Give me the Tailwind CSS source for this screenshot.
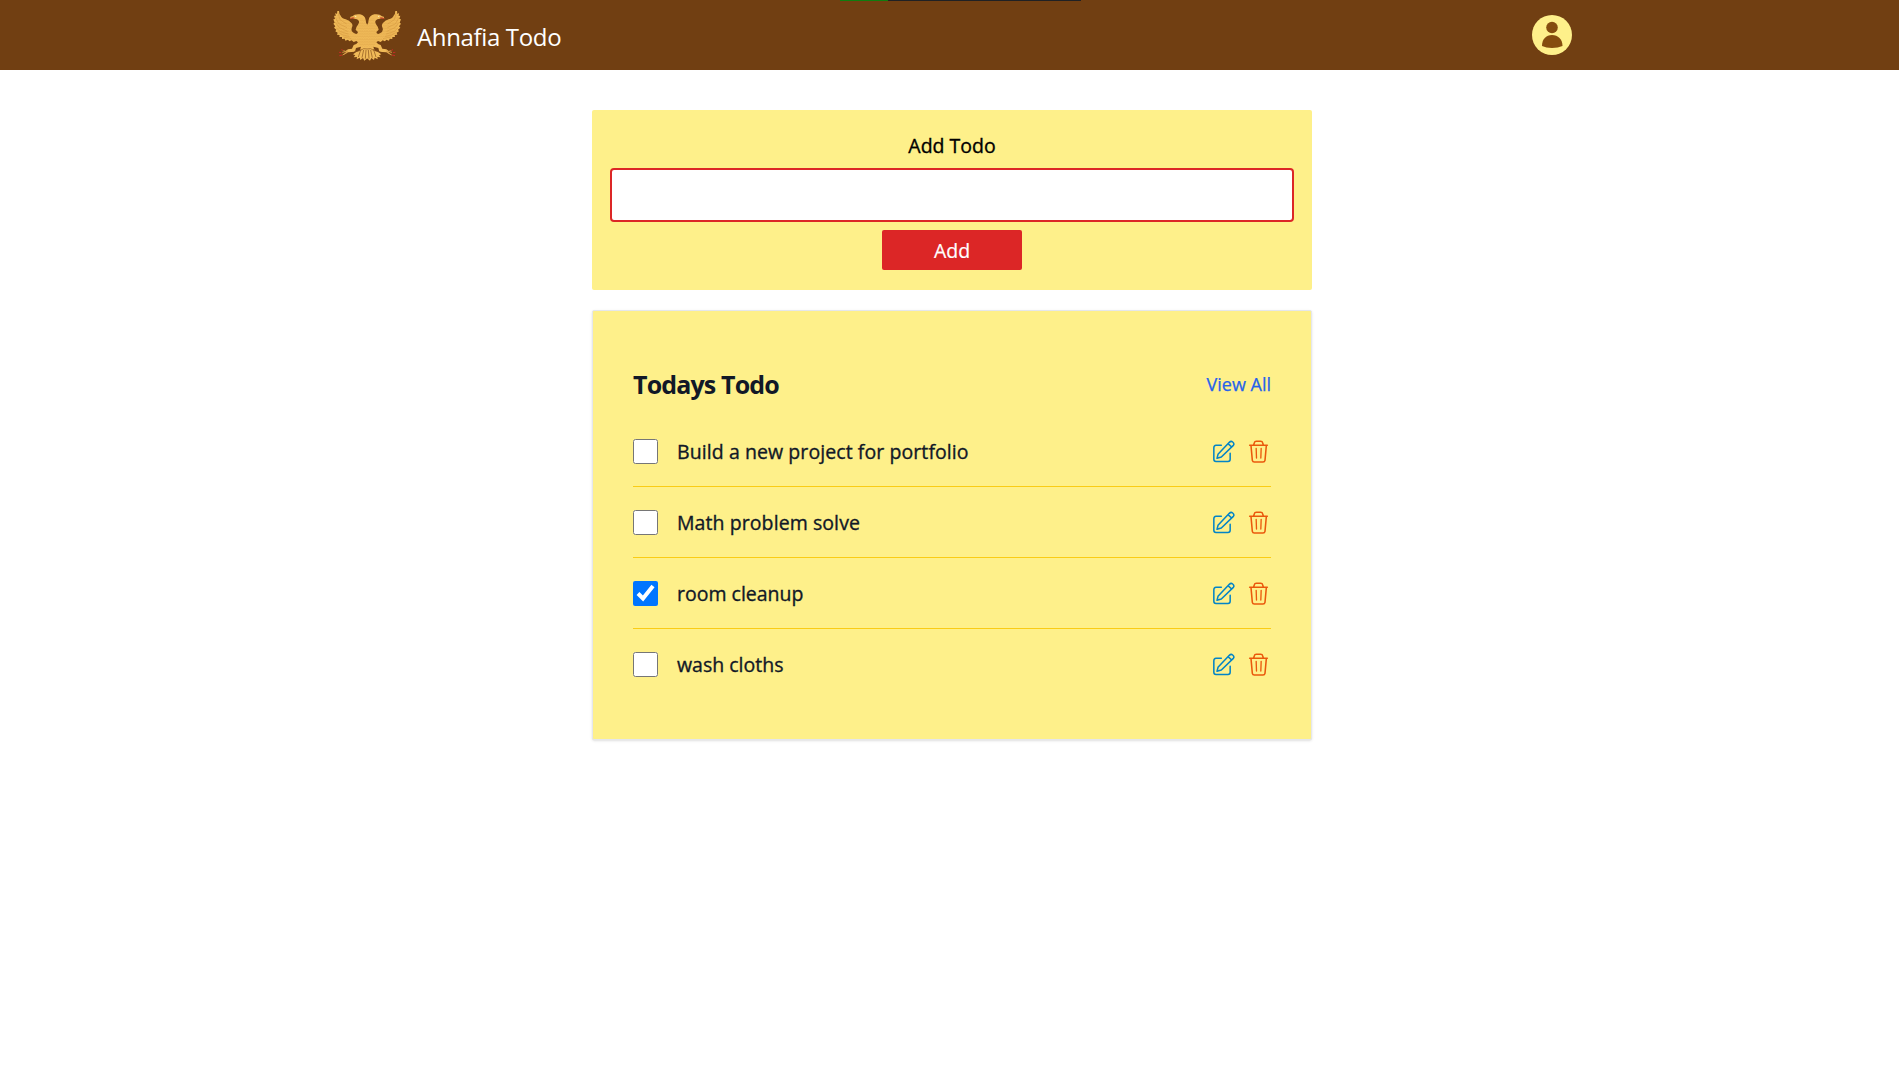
<!DOCTYPE html>
<html lang="en">
<head>
<meta charset="utf-8">
<title>Ahnafia Todo</title>
<script src="https://cdn.jsdelivr.net/npm/@tailwindcss/browser@4"></script>
</head>
<body class="bg-white min-h-screen overflow-hidden font-['Open_Sans',sans-serif] text-black">
<svg class="hidden">
  <symbol id="edit" viewBox="0 0 72 72"><g fill="none" stroke="currentColor" stroke-width="4.600" stroke-linejoin="round" stroke-linecap="round"><path d="M28 16H12Q5.500 16 5.500 23V58Q5.500 64.500 12 64.500H48Q54.500 64.500 54.500 58V40"/><path d="M15 55L18 43L52 7Q57 2 62 6Q68 11 64 16L28 51ZM48 11L59 21"/></g></symbol>
  <symbol id="trash" viewBox="0 0 72 72"><g fill="none" stroke="currentColor" stroke-width="4.600" stroke-linejoin="round" stroke-linecap="round"><path d="M5 16H58M17 15L19 8Q20 4 25 4H38Q43 4 44 8L46 15M9 17L13 61Q14 66 19 66H45Q50 66 51 61L55 17"/><path stroke-width="4" d="M24.500 25L25.500 54M39.500 25L38.500 54"/></g></symbol>
</svg>
<div class="absolute top-0 left-[840px] w-[241px] h-px bg-[#202124] flex"><div class="w-12 h-px bg-[#107c10]"></div></div>
<header class="h-[70px] bg-[#713f12]">
  <div class="ml-[333px] w-[1239px] h-full flex items-center justify-between">
    <a class="flex items-center">
      <svg class="w-[68px] h-[52px] mt-px" viewBox="24 12 204 156">
        <defs>
          <pattern id="feather" width="7" height="8" patternUnits="userSpaceOnUse"><path d="M0 2Q3.500 8 7 2" fill="none" stroke="#d29a40" stroke-width="1.300"/></pattern>
          <g id="half">
            <path d="M127 57Q122 50 122 42Q120 28 105 25Q89 23 82 31Q75 31 75 38Q83 35 88 38Q98 39 100 43Q105 48 99 56Q93 63 92 71L99 78Q97 87 88 82Q77 77 80 66Q85 57 79 51Q73 43 62 40Q50 37 47 29Q42 24 42 15L37 15L36 24L31 21L32 30L27 29L30 39L25 40L29 50L25 53L31 61L27 65L34 71L31 76L38 80L36 86L44 87L43 93L51 93L51 99L59 98L61 104L69 101L73 106L80 103L86 108L94 105L99 109Q95 116 86 117L81 128L69 130L62 135L52 132L63 139L53 148L69 139L90 137L93 126L108 122L104 134L94 138L84 145L91 148L86 154L96 153L95 160L104 155L106 162L114 156L118 164L127 157Z" fill="#f0ba58"/>
            <path d="M127 57Q122 50 122 42Q115 36 105 36Q105 48 99 56Q93 63 92 71L99 78L96 107L108 122H127ZM80 66Q85 57 79 51Q73 43 62 40Q50 37 47 29L37 24L32 40L38 80L60 98L96 105L99 78Q97 87 88 82Q77 77 80 66Z" fill="url(#feather)"/>
            <path d="M39 20L45 41L65 54M31 34L41 53L66 65M30 48L43 65L68 76M33 65L46 77L70 84M41 80L53 87L73 91M56 94L67 95L79 98" fill="none" stroke="#cf8f38" stroke-width="1.300"/>
            <path d="M108 129L100 153M116 132L111 155M123 132L121 158" stroke="#855019" stroke-width="2"/>
            <path d="M87 137L107 133Q115 125 127 129" fill="none" stroke="#8c561f" stroke-width="2"/>
            <path d="M76 38Q82 34 88 36" stroke="#c9271e" stroke-width="2.500" fill="none"/>
            <circle cx="92" cy="31" r="2" fill="#fff3c3"/>
            <path d="M49 131L54 133M43 149L52 147M42 139L49 140" stroke="#d5282b" stroke-width="2.500"/>
            <path d="M52 139L69 135M53 147L67 139" stroke="#d89b45" stroke-width="3"/>
          </g>
        </defs>
        <use href="#half"/><use href="#half" transform="matrix(-1 0 0 1 253 0)"/>
      </svg>
      <span class="ml-4 pt-1 text-2xl leading-8 tracking-[-0.35px] text-white">Ahnafia Todo</span>
    </a>
    <svg class="w-10 h-10" viewBox="0 0 40 40"><circle cx="20" cy="20" r="20" fill="#fef08a"/><g fill="#854d0e"><circle cx="20" cy="12.500" r="5.800"/><path d="M10 31C10 24 14 20 20 20S30.500 24 30.500 31Q26 33 20 33T10 31Z"/></g></svg>
  </div>
</header>
<main class="ml-[592px] w-[720px] pt-10">
  <form class="h-[180px] rounded-xs bg-[#fef08a] px-[18px] pt-5 flex flex-col items-center">
    <label class="h-[38px] leading-[32px] text-[19.500px] font-medium [-webkit-text-stroke:0.35px]">Add Todo</label>
    <input type="text" class="w-full h-[54px] bg-white border-2 border-[#dc2626] rounded">
    <button type="button" class="mt-2 w-[140px] h-10 rounded-xs bg-[#dc2626] text-white text-[19.500px] leading-[42px] [-webkit-text-stroke:0.2px]">Add</button>
  </form>
  <section class="mt-5 h-[430px] rounded-xs border border-[#e5e7eb] bg-[#fef08a] shadow-sm p-10 text-[#111827]">
    <div class="h-[65px] flex justify-between">
      <h2 class="text-[25px] leading-[67px] font-bold tracking-[-0.85px]">Todays Todo</h2>
      <a class="text-[18px] leading-[67px] text-[#2563eb] [-webkit-text-stroke:0.25px]">View All</a>
    </div>
    <ul class="text-[19.500px] font-medium [-webkit-text-stroke:0.35px]">
      <li class="h-[71px] border-b border-[#facc15] flex items-center"><input type="checkbox" class="w-[25px] h-[25px]"><span class="ml-[19px] pt-0.5 grow tracking-[0.08px]">Build a new project for portfolio</span><svg class="size-6 mt-px text-[#0284c7]"><use href="#edit"/></svg><svg class="size-6 mt-px ml-3 -mr-px text-[#ea580c]"><use href="#trash"/></svg></li>
      <li class="h-[71px] border-b border-[#facc15] flex items-center"><input type="checkbox" class="w-[25px] h-[25px]"><span class="ml-[19px] pt-0.5 grow tracking-[0.08px]">Math problem solve</span><svg class="size-6 mt-px text-[#0284c7]"><use href="#edit"/></svg><svg class="size-6 mt-px ml-3 -mr-px text-[#ea580c]"><use href="#trash"/></svg></li>
      <li class="h-[71px] border-b border-[#facc15] flex items-center"><input type="checkbox" checked class="w-[25px] h-[25px]"><span class="ml-[19px] pt-0.5 grow">room cleanup</span><svg class="size-6 mt-px text-[#0284c7]"><use href="#edit"/></svg><svg class="size-6 mt-px ml-3 -mr-px text-[#ea580c]"><use href="#trash"/></svg></li>
      <li class="h-[70px] flex items-center"><input type="checkbox" class="w-[25px] h-[25px]"><span class="ml-[19px] pt-0.5 grow">wash cloths</span><svg class="size-6 mt-px text-[#0284c7]"><use href="#edit"/></svg><svg class="size-6 mt-px ml-3 -mr-px text-[#ea580c]"><use href="#trash"/></svg></li>
    </ul>
  </section>
</main>
</body>
</html>
